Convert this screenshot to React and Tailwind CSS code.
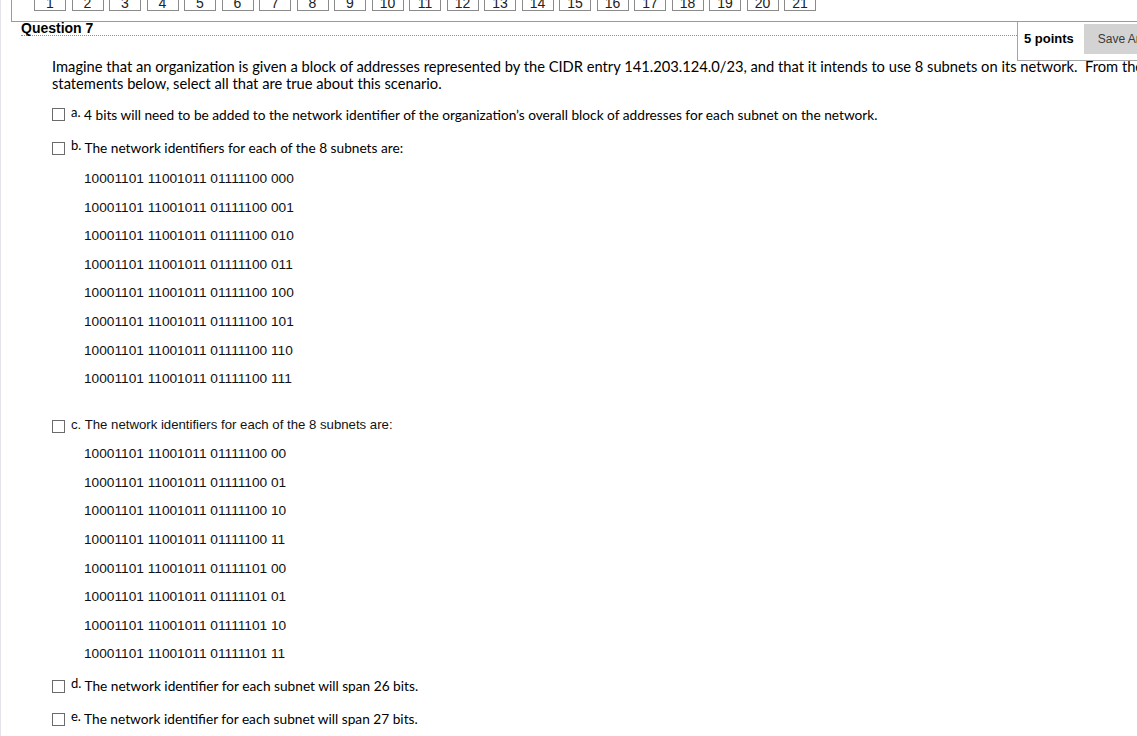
import React from "react";

const navNums = Array.from({ length: 21 }, (_, i) => i + 1);

const bRows = ["000", "001", "010", "011", "100", "101", "110", "111"].map(
  (s) => "10001101 11001011 01111100 " + s
);
const cRows = [
  "01111100 00",
  "01111100 01",
  "01111100 10",
  "01111100 11",
  "01111101 00",
  "01111101 01",
  "01111101 10",
  "01111101 11",
].map((s) => "10001101 11001011 " + s);

const Box = ({ drop = "align-[-2px]" }) => (
  <span className={`inline-block w-[13px] h-[13px] border border-[#6b6b6b] bg-white ${drop}`} />
);

const Letter = ({ children }) => (
  <span className="ml-[6px] text-[13px] leading-[10px] align-[3px]">{children}</span>
);

const BinList = ({ rows, first }) => (
  <div className={`pl-[32px] flex flex-col gap-[13.6px] ${first}`}>
    {rows.map((r) => (
      <div key={r} className="text-[13.7px] leading-[15px] text-[#111] whitespace-nowrap">
        {r}
      </div>
    ))}
  </div>
);

const App = () => {
  return (
    <div className="w-[1137px] h-[736px] overflow-hidden bg-white border-l border-[#e4e2ea] font-['Liberation_Sans',Arial,sans-serif] text-black">
      {/* question navigation strip */}
      <div className="ml-[10px] h-[22px] border-l border-b border-[#9a9a9a] pl-[22px] flex gap-[5.5px]">
        {navNums.map((n) => (
          <div
            key={n}
            className="-mt-[11px] h-[22px] w-[32px] shrink-0 border border-[#8a8a8a] flex items-end justify-center text-[14px] leading-none text-[#222]"
          >
            {n}
          </div>
        ))}
      </div>

      {/* header */}
      <div className="flex h-[39px]">
        <div className="flex-1">
          <div className="ml-[20px] h-[14px] border-b border-dotted border-[#8f8f8f] text-[14px] font-bold leading-[12px]">
            Question 7
          </div>
        </div>
        <div className="w-[120px] shrink-0 border-l border-b border-[#a5a5a5] flex items-start">
          <span className="ml-[6px] mt-[9px] text-[13px] font-bold leading-[15px] whitespace-nowrap">5 points</span>
          <div className="ml-[10px] mt-[2px] h-[30px] w-[80px] shrink-0 bg-[#d3d3d3] flex items-center pl-[14px] text-[12px] text-[#3a3a3a] whitespace-nowrap">
            Save Answer
          </div>
        </div>
      </div>

      {/* body */}
      <div className="pl-[51px] font-['Lato',sans-serif] text-[13.7px] leading-[17px]">
        <p className="-mt-[3.5px] text-[14.7px] whitespace-nowrap">
          Imagine that an organization is given a block of addresses represented by the CIDR entry 141.203.124.0/23, and
          that it intends to use 8 subnets on its network.&nbsp; From the
          <br />
          statements below, select all that are true about this scenario.
        </p>

        <div className="mt-[14.5px] whitespace-nowrap">
          <Box drop="align-[-1px]" />
          <Letter>a.</Letter> 4 bits will need to be added to the network identifier of the organization’s overall
          block of addresses for each subnet on the network.
        </div>

        <div className="mt-[16.4px] whitespace-nowrap">
          <Box />
          <Letter>b.</Letter> The network identifiers for each of the 8 subnets are:
        </div>

        <div className="font-['Liberation_Sans',Arial,sans-serif]">
          <BinList rows={bRows} first="mt-[14.6px]" />

          <div className="mt-[31px] text-[13.2px] leading-[15px] text-[#111] whitespace-nowrap">
            <Box drop="align-[-4px]" />
            <span className="ml-[6px]">c.</span> The network identifiers for each of the 8 subnets are:
          </div>

          <BinList rows={cRows} first="mt-[13px]" />
        </div>

        <div className="mt-[16.2px] whitespace-nowrap">
          <Box />
          <Letter>d.</Letter> The network identifier for each subnet will span 26 bits.
        </div>

        <div className="mt-[16px] whitespace-nowrap">
          <Box />
          <Letter>e.</Letter> The network identifier for each subnet will span 27 bits.
        </div>
      </div>
    </div>
  );
};

export default App;
